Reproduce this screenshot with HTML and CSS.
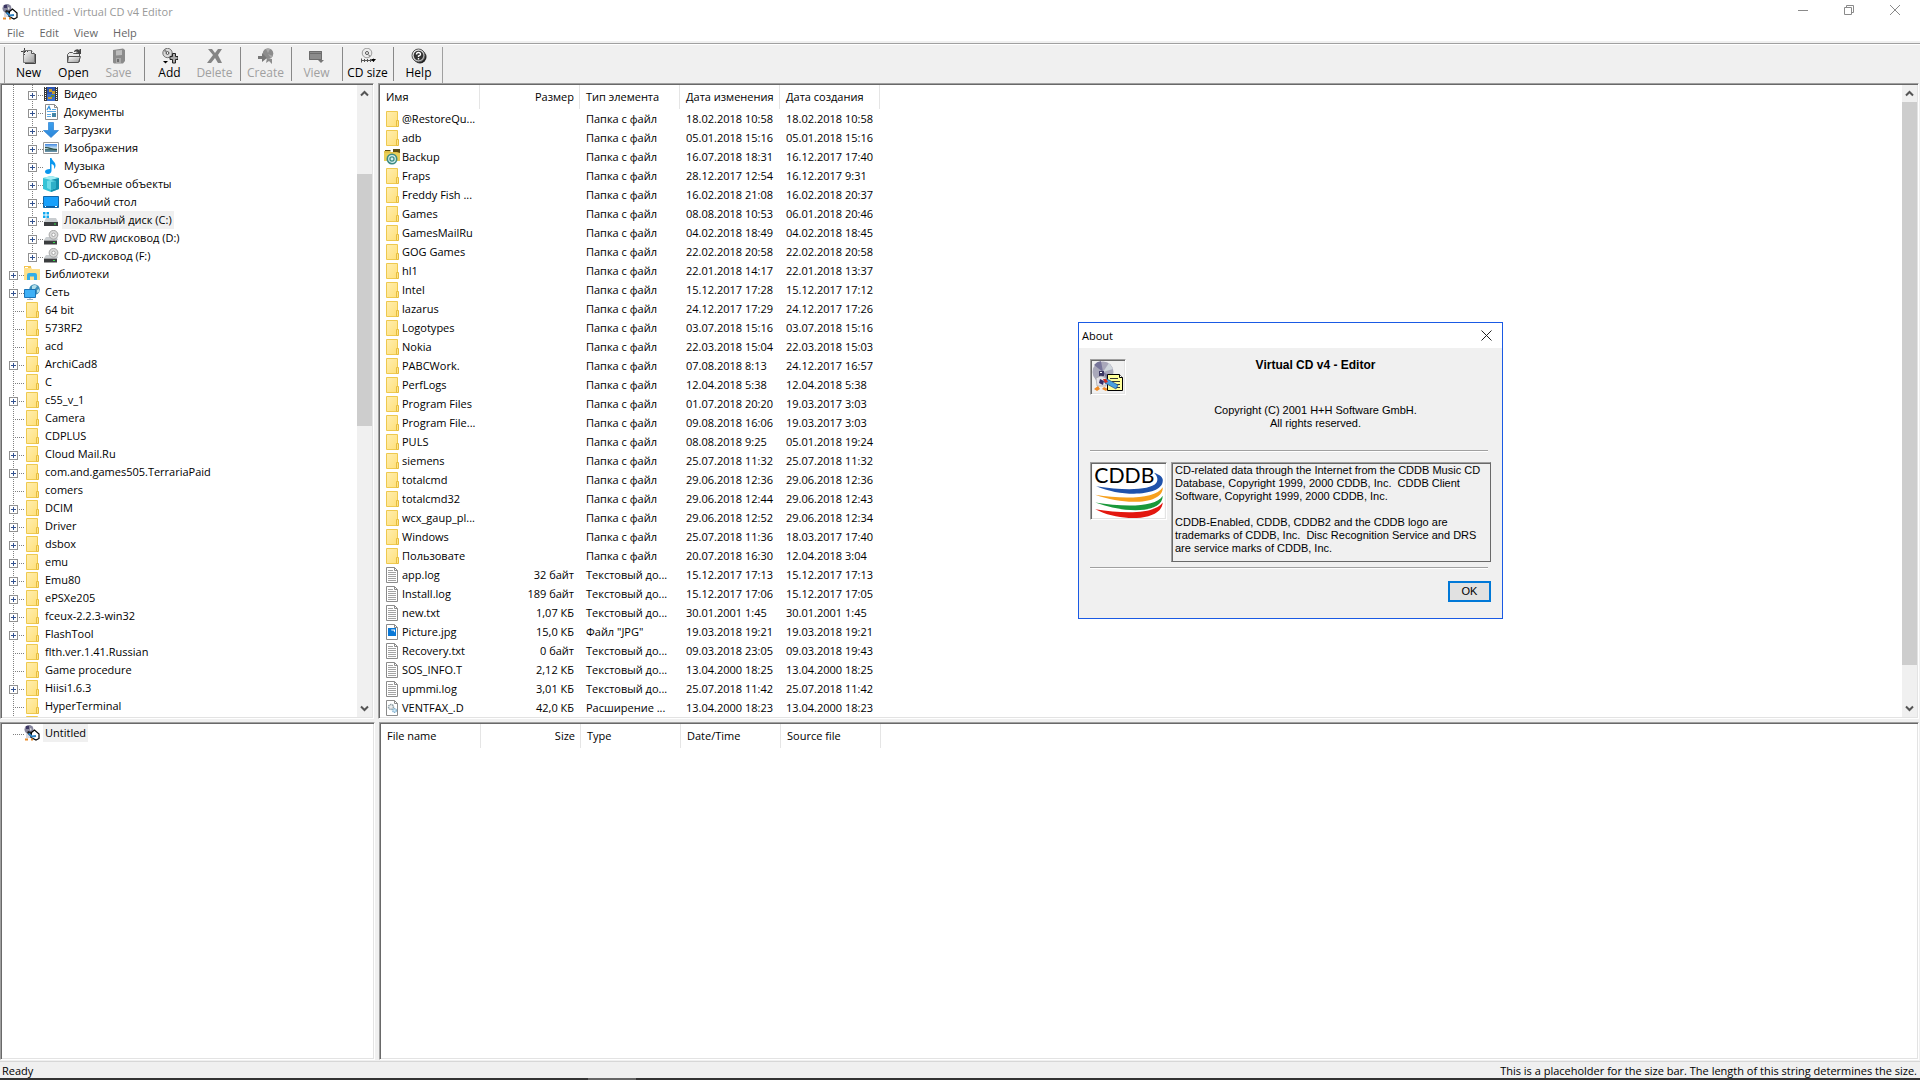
FILE: index.html
```html
<!DOCTYPE html>
<html lang="ru">
<head>
<meta charset="utf-8">
<title>Untitled - Virtual CD v4 Editor</title>
<link rel="stylesheet" href="styles.css">
</head>
<body>
<svg class="defs" aria-hidden="true">
  <defs>
    <linearGradient id="gf" x1="0" y1="0" x2="1" y2="1"><stop offset="0" stop-color="#ffeeb0"/><stop offset="1" stop-color="#ffe07a"/></linearGradient>
    <linearGradient id="gb" x1="0" y1="0" x2="0" y2="1"><stop offset="0" stop-color="#3ba0ee"/><stop offset="1" stop-color="#2c86d8"/></linearGradient>
    <linearGradient id="gp" x1="0" y1="0" x2="0" y2="1"><stop offset="0" stop-color="#3f86e0"/><stop offset=".55" stop-color="#d6ecf5"/><stop offset=".6" stop-color="#3c6a62"/><stop offset="1" stop-color="#6c97b8"/></linearGradient>
    <linearGradient id="gg" x1="0" y1="0" x2="1" y2="1"><stop offset="0" stop-color="#fff"/><stop offset="1" stop-color="#999"/></linearGradient>
  </defs>
  <symbol id="folder" viewBox="0 0 16 16"><path d="M2.5.5h11v15h-11z" fill="url(#gf)" stroke="#eec94f"/><path d="M12.5 9.5h2v6h-2z" fill="#ffe589" stroke="#e6bd3f"/></symbol>
  <symbol id="doc" viewBox="0 0 16 16"><path d="M2.5.5h8l3 3v12h-11z" fill="#fff" stroke="#8b8b8b"/><path d="M10.500.5v3h3" fill="none" stroke="#8b8b8b"/><path d="M4 3.500h5M4 5.500h8M4 7.500h8M4 9.500h8M4 11.500h8M4 13.500h8" stroke="#a3a3a3"/></symbol>
  <symbol id="jpg" viewBox="0 0 16 16"><path d="M2.500.500h8l3 3v12h-11z" fill="#fff" stroke="#8b8b8b"/><path d="M10.500.500v3h3" fill="none" stroke="#8b8b8b"/><path d="M4 4h8v8H4z" fill="#0a78d6"/><path d="M5 5.500h2l1 1.500 1-1 2 2.500V5.500z" fill="#fff"/></symbol>
  <symbol id="dll" viewBox="0 0 16 16"><path d="M2.500.500h8l3 3v12h-11z" fill="#fff" stroke="#8b8b8b"/><path d="M10.500.500v3h3" fill="none" stroke="#8b8b8b"/><circle cx="7" cy="7" r="2.500" fill="#eee" stroke="#8fa0a8" stroke-width="1.500" stroke-dasharray="1.500 .6"/><circle cx="10.500" cy="10.500" r="1.800" fill="#d4ecf8" stroke="#7fb0d0" stroke-width="1.300" stroke-dasharray="1.300 .5"/></symbol>
  <symbol id="backup" viewBox="0 0 16 16"><path d="M0 2h6l1 1h9v9H0z" fill="#e2c24a"/><path d="M1 1h5l1 1H1zM9 0h7v4l-3-1H9z" fill="#5c4d12"/><path d="M0 4h16v8H0z" fill="#e9cf58"/><circle cx="8" cy="10" r="5.500" fill="#3d8b84"/><circle cx="8" cy="10" r="3.300" fill="none" stroke="#d6efec" stroke-width="1.200"/><circle cx="8" cy="10" r="1.400" fill="#d6efec"/></symbol>
  <symbol id="video" viewBox="0 0 16 16"><path d="M1 1h14v14H1z" fill="#3a3a3a"/><path d="M4 1h8v7H4z" fill="#2c55b0"/><path d="M4 8h8v7H4z" fill="#3a6fd0"/><path d="M6 3h3v3H6zM9 5h3v3H9zM5 11h4v2H5z" fill="#c89a2c"/><path d="M8 9h3v2H8z" fill="#5a8a3c"/><path d="M2.500 1v14M13.500 1v14" stroke="#fff" stroke-dasharray="1 1"/></symbol>
  <symbol id="docs" viewBox="0 0 16 16"><path d="M2.500.500h9l3 3v12h-12z" fill="#fff" stroke="#8b8b8b"/><path d="M11.500.500v3h3" fill="none" stroke="#8b8b8b"/><path d="M4 6l2-3.500L7.500 6" fill="none" stroke="#2f8fdc" stroke-width="1.300"/><path d="M9 5.500h4M4 7.500h9M4 10.500h4M4 12.500h4" stroke="#5aa9e6"/><path d="M9 9h4v4H9z" fill="#4487a8"/></symbol>
  <symbol id="down" viewBox="0 0 16 16"><path d="M5.500.500h5v8h5L8 15.500.500 8.500h5z" fill="url(#gb)" stroke="#2c7fd0" stroke-width=".7"/></symbol>
  <symbol id="pics" viewBox="0 0 16 16"><path d="M.500 2.500h15v11H.500z" fill="#fff" stroke="#9a9a9a"/><path d="M2 4h12v8H2z" fill="url(#gp)"/><path d="M2 8c4 0 6 2 12 2v-1C9 9 6 6.500 2 7z" fill="#2f4f48"/></symbol>
  <symbol id="music" viewBox="0 0 16 16"><path d="M7 0h1.500c.5 3 4.500 4 4 8-.2 1.500-1 2.500-1.500 3 .8-3-.5-4.500-2.500-5v6.500C8.500 14.500 7 16 5 16S2 15 2 13.500 4 11 7 11z" fill="#0a97ee"/></symbol>
  <symbol id="cube" viewBox="0 0 16 16"><path d="M0 2l8-2 8 2v11l-8 3-8-3z" fill="#35c3d6"/><path d="M0 2l8-2 8 2-8 2z" fill="#a8eef4"/><path d="M8 4l8-2v11l-8 3z" fill="#1590ad"/><path d="M4 5l4-1 5 1v7l-5 2-4-2z" fill="#6edbe8"/><path d="M8 6l5-1v7l-5 2z" fill="#2fb0c8"/></symbol>
  <symbol id="desk" viewBox="0 0 16 16"><path d="M.500 2.500h15v11H.500z" fill="#18a0fb" stroke="#1267a8"/><path d="M1 12.500h14" stroke="#0a5fa8"/><path d="M2 12.500h1M12 12.500h2" stroke="#fff"/></symbol>
  <symbol id="hdd" viewBox="0 0 16 16"><path d="M0 0h2.500v2.500H0zM3.500 0H6v2.500H3.500zM0 3.500h2.500V6H0zM3.500 3.500H6V6H3.500z" fill="#12a8ee"/><path d="M3 6h10l2 4H1z" fill="#c9cdd0"/><path d="M1 10h14v4H1z" fill="#3b3d3f"/><path d="M11 11.500h2v1h-2z" fill="#32e04a"/></symbol>
  <symbol id="odd" viewBox="0 0 16 16"><path d="M3 7h11l1 3H1z" fill="#c9cdd0"/><circle cx="10.500" cy="4.800" r="4.400" fill="#dadada" stroke="#979797" stroke-width=".8"/><circle cx="10.500" cy="4.800" r="1.700" fill="#fff" stroke="#999" stroke-width=".8"/><path d="M1 10.500h13v4H1z" fill="#3b3d3f"/><path d="M10 12h2v1h-2z" fill="#32e04a"/></symbol>
  <symbol id="libs" viewBox="0 0 16 16"><path d="M0 1h7l1 2h8v11H0z" fill="#ffe08a"/><path d="M0 0h7v2H0z" fill="#f4c54e"/><path d="M1 1h3v1H1z" fill="#fff"/><path d="M3 14V9q0-2 2-2h6q2 0 2 2v5h-3v-3.500H6V14z" fill="#35aee8"/></symbol>
  <symbol id="net" viewBox="0 0 16 16"><circle cx="10.500" cy="5.500" r="5.300" fill="#3f8fb8"/><path d="M8 2q3-2 5 0l-2 3-3 1zM13 6l2-1v3l-2 1z" fill="#b5dfe8"/><path d="M.500 5.500h11v8H.500z" fill="#3eb0f6" stroke="#1b74b8"/><path d="M3 15.500h6M6 14v1" stroke="#9ab"/></symbol>
  <symbol id="app" viewBox="0 0 16 16"><circle cx="5" cy="4.500" r="4.500" fill="#85849c"/><path d="M2 1h3v3H2z" fill="#3c3763"/><path d="M6 3l2 1-2 2z" fill="#ddd"/><path d="M2 8h4v5H2z" fill="#d8d8e0"/><path d="M4 6l4 1 3 4-4 1-4-4z" fill="#222"/><path d="M7.500 7.500l3-2.500 4.500 4v4.500l-3 1.500-5-2.500z" fill="#fff" stroke="#000" stroke-width="1.200"/><path d="M4.500 8.500l3.500 3 4-.5" stroke="#2c7fc0" stroke-width="2" fill="none"/><path d="M1 14.500h3M7 14.500h2" stroke="#e88a2a" stroke-width="1.800"/></symbol>
  <symbol id="plus" viewBox="0 0 9 9"><path d="M2 4.500h5M4.500 2v5" stroke="#33528f"/></symbol>
  <symbol id="up" viewBox="0 0 9 9"><path d="M1 6.500L4.500 3 8 6.500" fill="none" stroke="#555" stroke-width="2"/></symbol>
  <symbol id="dn" viewBox="0 0 9 9"><path d="M1 2.500L4.500 6 8 2.500" fill="none" stroke="#555" stroke-width="2"/></symbol>
</svg>

<header class="titlebar">
  <svg class="ico"><use href="#app"/></svg>
  <h1>Untitled - Virtual CD v4 Editor</h1>
  <div class="winbtns">
    <button aria-label="Minimize"><svg viewBox="0 0 10 10"><path d="M0 5.500h10"/></svg></button>
    <button aria-label="Restore"><svg viewBox="0 0 10 10"><path d="M.500 2.500h7v7h-7zM2.500 2.500v-2h7v7h-2"/></svg></button>
    <button aria-label="Close"><svg viewBox="0 0 10 10"><path d="M0 0l10 10M10 0L0 10"/></svg></button>
  </div>
</header>
<nav class="menubar"><button>File</button><button>Edit</button><button>View</button><button>Help</button></nav>

<div class="toolbar">
  <div class="tools">
  <button><svg class="ico" viewBox="0 0 16 16"><path d="M2.500 2.500h8l3 3v9h-11z" fill="url(#gg)" stroke="#777"/><path d="M10.500 2.500v3h3" fill="#fff" stroke="#555"/><path d="M3.500 0v7M0 3.500h7" stroke="#444" stroke-dasharray="2 1"/><path d="M14.500 6v9.500H4" fill="none" stroke="#444"/></svg>New</button>
  <button><svg class="ico" viewBox="0 0 16 16"><path d="M1.500 6.500l2-2h3l1 1h6v8h-12z" fill="#e8e8e8" stroke="#555"/><path d="M1.500 14.500l1-6h12l-2 6z" fill="url(#gg)" stroke="#555"/><path d="M8 3q3-3 5.500-.5V1H15v5h-5V4.500h2Q10.500 3 8 4z" fill="#444"/></svg>Open</button>
  <button disabled><svg class="ico" viewBox="0 0 16 16"><path d="M2 2l10-1.500 2 1.500v11l-2 2.500H3l-1-1z" fill="#8b8b8b"/><path d="M5 2.500l6-.5v5l-6 .5z" fill="#bdbdbd"/><path d="M5 10h5v5H5z" fill="#aaa"/><path d="M6 11h2v3H6z" fill="#6f6f6f"/></svg>Save</button>
  <i></i>
  <button><svg class="ico" viewBox="0 0 16 16"><circle cx="5.500" cy="5" r="4.700" fill="#d8d8d8" stroke="#555" stroke-width=".8"/><path d="M5.500 5l-4-2 2-2z" fill="#888"/><circle cx="5.500" cy="5" r="1.400" fill="#fff" stroke="#444"/><path d="M10.500 5.500h3v3H16v3h-2.500V15h-3v-3.500H8v-3h2.500z" fill="#a8a8a8" stroke="#222"/><path d="M1 13h5l-2.500 2.500z"/></svg>Add</button>
  <button disabled><svg class="ico" viewBox="0 0 16 16"><path d="M1 1h4l3 4 3-4h4l-4 6 4 8h-4l-3-5-4 5H0l6-8z" fill="#858585"/></svg>Delete</button>
  <i></i>
  <button disabled><svg class="ico" viewBox="0 0 16 16"><circle cx="10" cy="5.500" r="5.300" fill="#8c8c8c"/><path d="M10 5L8 1h4zM10 6l5 2-2 2z" fill="#aaa"/><path d="M0 8h4V5l5 5-5 4v-3H0z" fill="#777"/><path d="M9 10l5 1v5l-3-3-3 2z" fill="#8c8c8c"/></svg>Create</button>
  <i></i>
  <button disabled><svg class="ico" viewBox="0 0 16 16"><path d="M0 3h13v9H0z" fill="#8c8c8c"/><path d="M.500 3.500h12v8h-12zM1 5.500h11" fill="none" stroke="#6c6c6c"/><path d="M9 12h6l-3 3z" fill="#777"/></svg>View</button>
  <i></i>
  <button><svg class="ico" viewBox="0 0 16 16"><circle cx="7" cy="5" r="4.800" fill="#ececec" stroke="#888" stroke-width=".8"/><circle cx="7" cy="5" r="1.500" fill="#fff" stroke="#555"/><path d="M8 6l3 2-2 1z" fill="#888"/><path d="M1.500 10.500v4M13.500 10.500v3M2 12.500h11M4.500 11v3M7.500 11v3M10.500 11v3" stroke="#555"/><path d="M11 11h5l-2.500 3z"/></svg>CD size</button>
  <i></i>
  <button><svg class="ico" viewBox="0 0 16 16"><circle cx="9" cy="9" r="6.500" fill="#222"/><circle cx="7.500" cy="7.500" r="6.500" fill="url(#gg)" stroke="#555"/><circle cx="7.500" cy="7.500" r="4.800" fill="#333"/><path d="M5.500 6.500Q5.500 4.500 7.500 4.500t2 2Q9.500 7.500 7.500 8v1M7.500 10v1.500" fill="none" stroke="#fff" stroke-width="1.400"/></svg>Help</button>
  </div>
</div>

<main>
  <div class="row upper">
    <section class="pane side">
      <ul class="tree">
        <li class="sub"><button class="x" aria-label="+"><svg><use href="#plus"/></svg></button><svg class="ico"><use href="#video"/></svg><span>Видео</span></li>
        <li class="sub"><button class="x" aria-label="+"><svg><use href="#plus"/></svg></button><svg class="ico"><use href="#docs"/></svg><span>Документы</span></li>
        <li class="sub"><button class="x" aria-label="+"><svg><use href="#plus"/></svg></button><svg class="ico"><use href="#down"/></svg><span>Загрузки</span></li>
        <li class="sub"><button class="x" aria-label="+"><svg><use href="#plus"/></svg></button><svg class="ico"><use href="#pics"/></svg><span>Изображения</span></li>
        <li class="sub"><button class="x" aria-label="+"><svg><use href="#plus"/></svg></button><svg class="ico"><use href="#music"/></svg><span>Музыка</span></li>
        <li class="sub"><button class="x" aria-label="+"><svg><use href="#plus"/></svg></button><svg class="ico"><use href="#cube"/></svg><span>Объемные объекты</span></li>
        <li class="sub"><button class="x" aria-label="+"><svg><use href="#plus"/></svg></button><svg class="ico"><use href="#desk"/></svg><span>Рабочий стол</span></li>
        <li class="sub"><button class="x" aria-label="+"><svg><use href="#plus"/></svg></button><svg class="ico"><use href="#hdd"/></svg><span class="sel">Локальный диск (C:)</span></li>
        <li class="sub"><button class="x" aria-label="+"><svg><use href="#plus"/></svg></button><svg class="ico"><use href="#odd"/></svg><span>DVD RW дисковод (D:)</span></li>
        <li class="sub last"><button class="x" aria-label="+"><svg><use href="#plus"/></svg></button><svg class="ico"><use href="#odd"/></svg><span>CD-дисковод (F:)</span></li>
        <li><button class="x" aria-label="+"><svg><use href="#plus"/></svg></button><svg class="ico"><use href="#libs"/></svg><span>Библиотеки</span></li>
        <li><button class="x" aria-label="+"><svg><use href="#plus"/></svg></button><svg class="ico"><use href="#net"/></svg><span>Сеть</span></li>
        <li class="leaf"><svg class="ico"><use href="#folder"/></svg><span>64 bit</span></li>
        <li class="leaf"><svg class="ico"><use href="#folder"/></svg><span>573RF2</span></li>
        <li class="leaf"><svg class="ico"><use href="#folder"/></svg><span>acd</span></li>
        <li><button class="x" aria-label="+"><svg><use href="#plus"/></svg></button><svg class="ico"><use href="#folder"/></svg><span>ArchiCad8</span></li>
        <li class="leaf"><svg class="ico"><use href="#folder"/></svg><span>C</span></li>
        <li><button class="x" aria-label="+"><svg><use href="#plus"/></svg></button><svg class="ico"><use href="#folder"/></svg><span>c55_v_1</span></li>
        <li class="leaf"><svg class="ico"><use href="#folder"/></svg><span>Camera</span></li>
        <li class="leaf"><svg class="ico"><use href="#folder"/></svg><span>CDPLUS</span></li>
        <li><button class="x" aria-label="+"><svg><use href="#plus"/></svg></button><svg class="ico"><use href="#folder"/></svg><span>Cloud Mail.Ru</span></li>
        <li><button class="x" aria-label="+"><svg><use href="#plus"/></svg></button><svg class="ico"><use href="#folder"/></svg><span>com.and.games505.TerrariaPaid</span></li>
        <li class="leaf"><svg class="ico"><use href="#folder"/></svg><span>comers</span></li>
        <li><button class="x" aria-label="+"><svg><use href="#plus"/></svg></button><svg class="ico"><use href="#folder"/></svg><span>DCIM</span></li>
        <li><button class="x" aria-label="+"><svg><use href="#plus"/></svg></button><svg class="ico"><use href="#folder"/></svg><span>Driver</span></li>
        <li><button class="x" aria-label="+"><svg><use href="#plus"/></svg></button><svg class="ico"><use href="#folder"/></svg><span>dsbox</span></li>
        <li><button class="x" aria-label="+"><svg><use href="#plus"/></svg></button><svg class="ico"><use href="#folder"/></svg><span>emu</span></li>
        <li><button class="x" aria-label="+"><svg><use href="#plus"/></svg></button><svg class="ico"><use href="#folder"/></svg><span>Emu80</span></li>
        <li><button class="x" aria-label="+"><svg><use href="#plus"/></svg></button><svg class="ico"><use href="#folder"/></svg><span>ePSXe205</span></li>
        <li><button class="x" aria-label="+"><svg><use href="#plus"/></svg></button><svg class="ico"><use href="#folder"/></svg><span>fceux-2.2.3-win32</span></li>
        <li><button class="x" aria-label="+"><svg><use href="#plus"/></svg></button><svg class="ico"><use href="#folder"/></svg><span>FlashTool</span></li>
        <li class="leaf"><svg class="ico"><use href="#folder"/></svg><span>flth.ver.1.41.Russian</span></li>
        <li class="leaf"><svg class="ico"><use href="#folder"/></svg><span>Game procedure</span></li>
        <li><button class="x" aria-label="+"><svg><use href="#plus"/></svg></button><svg class="ico"><use href="#folder"/></svg><span>Hiisi1.6.3</span></li>
        <li class="leaf"><svg class="ico"><use href="#folder"/></svg><span>HyperTerminal</span></li>
        <li class="leaf"><svg class="ico"><use href="#folder"/></svg></li>
      </ul>
      <div class="scroll tree-scroll"><button aria-label="Up"><svg><use href="#up"/></svg></button><div class="track"><div class="thumb"></div></div><button aria-label="Down"><svg><use href="#dn"/></svg></button></div>
    </section>
    <section class="pane list">
      <div class="table-wrap">
      <table>
        <thead><tr><th>Имя</th><th class="num">Размер</th><th>Тип элемента</th><th>Дата изменения</th><th>Дата создания</th></tr></thead>
        <tbody>
        <tr><td><svg class="ico"><use href="#folder"/></svg>@RestoreQu...</td><td></td><td>Папка с файл</td><td>18.02.2018 10:58</td><td>18.02.2018 10:58</td></tr>
        <tr><td><svg class="ico"><use href="#folder"/></svg>adb</td><td></td><td>Папка с файл</td><td>05.01.2018 15:16</td><td>05.01.2018 15:16</td></tr>
        <tr><td><svg class="ico"><use href="#backup"/></svg>Backup</td><td></td><td>Папка с файл</td><td>16.07.2018 18:31</td><td>16.12.2017 17:40</td></tr>
        <tr><td><svg class="ico"><use href="#folder"/></svg>Fraps</td><td></td><td>Папка с файл</td><td>28.12.2017 12:54</td><td>16.12.2017 9:31</td></tr>
        <tr><td><svg class="ico"><use href="#folder"/></svg>Freddy Fish ...</td><td></td><td>Папка с файл</td><td>16.02.2018 21:08</td><td>16.02.2018 20:37</td></tr>
        <tr><td><svg class="ico"><use href="#folder"/></svg>Games</td><td></td><td>Папка с файл</td><td>08.08.2018 10:53</td><td>06.01.2018 20:46</td></tr>
        <tr><td><svg class="ico"><use href="#folder"/></svg>GamesMailRu</td><td></td><td>Папка с файл</td><td>04.02.2018 18:49</td><td>04.02.2018 18:45</td></tr>
        <tr><td><svg class="ico"><use href="#folder"/></svg>GOG Games</td><td></td><td>Папка с файл</td><td>22.02.2018 20:58</td><td>22.02.2018 20:58</td></tr>
        <tr><td><svg class="ico"><use href="#folder"/></svg>hl1</td><td></td><td>Папка с файл</td><td>22.01.2018 14:17</td><td>22.01.2018 13:37</td></tr>
        <tr><td><svg class="ico"><use href="#folder"/></svg>Intel</td><td></td><td>Папка с файл</td><td>15.12.2017 17:28</td><td>15.12.2017 17:12</td></tr>
        <tr><td><svg class="ico"><use href="#folder"/></svg>lazarus</td><td></td><td>Папка с файл</td><td>24.12.2017 17:29</td><td>24.12.2017 17:26</td></tr>
        <tr><td><svg class="ico"><use href="#folder"/></svg>Logotypes</td><td></td><td>Папка с файл</td><td>03.07.2018 15:16</td><td>03.07.2018 15:16</td></tr>
        <tr><td><svg class="ico"><use href="#folder"/></svg>Nokia</td><td></td><td>Папка с файл</td><td>22.03.2018 15:04</td><td>22.03.2018 15:03</td></tr>
        <tr><td><svg class="ico"><use href="#folder"/></svg>PABCWork.</td><td></td><td>Папка с файл</td><td>07.08.2018 8:13</td><td>24.12.2017 16:57</td></tr>
        <tr><td><svg class="ico"><use href="#folder"/></svg>PerfLogs</td><td></td><td>Папка с файл</td><td>12.04.2018 5:38</td><td>12.04.2018 5:38</td></tr>
        <tr><td><svg class="ico"><use href="#folder"/></svg>Program Files</td><td></td><td>Папка с файл</td><td>01.07.2018 20:20</td><td>19.03.2017 3:03</td></tr>
        <tr><td><svg class="ico"><use href="#folder"/></svg>Program File...</td><td></td><td>Папка с файл</td><td>09.08.2018 16:06</td><td>19.03.2017 3:03</td></tr>
        <tr><td><svg class="ico"><use href="#folder"/></svg>PULS</td><td></td><td>Папка с файл</td><td>08.08.2018 9:25</td><td>05.01.2018 19:24</td></tr>
        <tr><td><svg class="ico"><use href="#folder"/></svg>siemens</td><td></td><td>Папка с файл</td><td>25.07.2018 11:32</td><td>25.07.2018 11:32</td></tr>
        <tr><td><svg class="ico"><use href="#folder"/></svg>totalcmd</td><td></td><td>Папка с файл</td><td>29.06.2018 12:36</td><td>29.06.2018 12:36</td></tr>
        <tr><td><svg class="ico"><use href="#folder"/></svg>totalcmd32</td><td></td><td>Папка с файл</td><td>29.06.2018 12:44</td><td>29.06.2018 12:43</td></tr>
        <tr><td><svg class="ico"><use href="#folder"/></svg>wcx_gaup_pl...</td><td></td><td>Папка с файл</td><td>29.06.2018 12:52</td><td>29.06.2018 12:34</td></tr>
        <tr><td><svg class="ico"><use href="#folder"/></svg>Windows</td><td></td><td>Папка с файл</td><td>25.07.2018 11:36</td><td>18.03.2017 17:40</td></tr>
        <tr><td><svg class="ico"><use href="#folder"/></svg>Пользовате</td><td></td><td>Папка с файл</td><td>20.07.2018 16:30</td><td>12.04.2018 3:04</td></tr>
        <tr><td><svg class="ico"><use href="#doc"/></svg>app.log</td><td class="num">32 байт</td><td>Текстовый до...</td><td>15.12.2017 17:13</td><td>15.12.2017 17:13</td></tr>
        <tr><td><svg class="ico"><use href="#doc"/></svg>Install.log</td><td class="num">189 байт</td><td>Текстовый до...</td><td>15.12.2017 17:06</td><td>15.12.2017 17:05</td></tr>
        <tr><td><svg class="ico"><use href="#doc"/></svg>new.txt</td><td class="num">1,07 КБ</td><td>Текстовый до...</td><td>30.01.2001 1:45</td><td>30.01.2001 1:45</td></tr>
        <tr><td><svg class="ico"><use href="#jpg"/></svg>Picture.jpg</td><td class="num">15,0 КБ</td><td>Файл "JPG"</td><td>19.03.2018 19:21</td><td>19.03.2018 19:21</td></tr>
        <tr><td><svg class="ico"><use href="#doc"/></svg>Recovery.txt</td><td class="num">0 байт</td><td>Текстовый до...</td><td>09.03.2018 23:05</td><td>09.03.2018 19:43</td></tr>
        <tr><td><svg class="ico"><use href="#doc"/></svg>SOS_INFO.T</td><td class="num">2,12 КБ</td><td>Текстовый до...</td><td>13.04.2000 18:25</td><td>13.04.2000 18:25</td></tr>
        <tr><td><svg class="ico"><use href="#doc"/></svg>upmmi.log</td><td class="num">3,01 КБ</td><td>Текстовый до...</td><td>25.07.2018 11:42</td><td>25.07.2018 11:42</td></tr>
        <tr><td><svg class="ico"><use href="#dll"/></svg>VENTFAX_.D</td><td class="num">42,0 КБ</td><td>Расширение ...</td><td>13.04.2000 18:23</td><td>13.04.2000 18:23</td></tr>
        </tbody>
      </table>
      </div>
      <div class="scroll list-scroll"><button aria-label="Up"><svg><use href="#up"/></svg></button><div class="track"><div class="thumb"></div></div><button aria-label="Down"><svg><use href="#dn"/></svg></button></div>
    </section>
  </div>
  <div class="row lower">
    <section class="pane side">
      <ul class="tree"><li class="leaf only"><svg class="ico"><use href="#app"/></svg><span class="sel">Untitled</span></li></ul>
    </section>
    <section class="pane list">
      <div class="table-wrap">
      <table><thead><tr><th>File name</th><th class="num">Size</th><th>Type</th><th>Date/Time</th><th>Source file</th></tr></thead></table>
      </div>
    </section>
  </div>
</main>
<footer class="status"><span>Ready</span><span>This is a placeholder for the size bar. The length of this string determines the size.</span></footer>
<div class="taskbar"><div></div></div>

<div class="dialog" role="dialog" aria-labelledby="about">
  <div class="dlg-title"><h2 id="about">About</h2><button aria-label="Close"><svg viewBox="0 0 11 11"><path d="M.500.500l10 10M10.500.500l-10 10"/></svg></button></div>
  <div class="dlg-body">
    <div class="dlg-top">
      <svg class="sunk" viewBox="0 0 32 32"><circle cx="11" cy="11" r="10.500" fill="#a9a8ba"/><path d="M11 11L2 4a11 11 0 0 1 7-4zM11 11l9 5a11 11 0 0 1-4 4z" fill="#77759a"/><path d="M11 11L17 2l4 6z" fill="#cfd6dc"/><path d="M7 10h5v5H7z" fill="#3c3763"/><path d="M8 11h2v1H8z" fill="#fff"/><path d="M4 17l5-2 5 2v8H5z" fill="#e5e3ea" stroke="#999" stroke-width=".6"/><path d="M8 18l4 2-1 4-4-2z" fill="#34306a"/><path d="M2 28l4-3 2 3-3 2zM10 28l2-2 4 2-2 2z" fill="#f08a24"/><path d="M15.500 13.500h12l3 3v13h-15z" fill="#ffff9c" stroke="#000"/><path d="M27.500 13.500v3h3" fill="#fff" stroke="#000"/><path d="M18 17.500h8M20 20.500h8M24 23.500h4M24 26.500h4" stroke="#333"/><path d="M12 19l3-1 11 6-2 4-11-6z" fill="#4aa0e0" stroke="#1c4f90" stroke-width=".7"/><path d="M11 18h3l2 3-3 1z" fill="#d82c1e"/></svg>
      <div class="about-text"><h3>Virtual CD v4 - Editor</h3><p>Copyright (C) 2001 H+H Software GmbH.<br>All rights reserved.</p></div>
    </div>
    <hr>
    <div class="dlg-mid">
      <svg class="sunk logo" viewBox="0 0 75 56"><path d="M0 0h75v56H0z" fill="#fff"/><text x="2" y="20">CDDB</text><path d="M64 9C70 11 74 14 73 18 72 33 32 35 4 23 34 28 60 27 66 20 69 16 67 12 64 9z" fill="#1f52ab"/><path d="M73 24C74 41 36 44 3 32 34 37 66 36 73 24z" fill="#f7a01d"/><path d="M73 33C73 51 36 52 3 40 34 45 66 45 73 33z" fill="#18983a"/><path d="M73 40C72 59 30 61 3 47 34 52 64 52 73 40z" fill="#e3170f"/></svg>
      <div class="legal"><p>CD-related data through the Internet from the CDDB Music CD<br>Database, Copyright 1999, 2000 CDDB, Inc.&nbsp; CDDB Client<br>Software, Copyright 1999, 2000 CDDB, Inc.</p><p>CDDB-Enabled, CDDB, CDDB2 and the CDDB logo are<br>trademarks of CDDB, Inc.&nbsp; Disc Recognition Service and DRS<br>are service marks of CDDB, Inc.</p></div>
    </div>
    <hr>
    <button class="ok">OK</button>
  </div>
</div>
</body>
</html>
```

FILE: styles.css
```css
* { box-sizing: border-box; }
body {
  margin: 0;
  height: 100vh;
  display: flex;
  flex-direction: column;
  overflow: hidden;
  background: #f0f0f0;
  color: #000;
  font: 11px/18px "Open Sans", "Noto Sans", sans-serif;
}
button { font: inherit; color: inherit; background: none; border: 0; padding: 0; margin: 0; }
h1, h2, h3, p, ul { margin: 0; padding: 0; font: inherit; }
.defs { position: absolute; width: 0; height: 0; }
.ico { width: 16px; height: 16px; flex: none; display: block; }

.titlebar { display: flex; align-items: center; gap: 5px; height: 24px; padding: 0 2px; background: #fff; color: #999; }
.titlebar h1 { flex: 1; }
.winbtns { display: flex; align-self: flex-start; }
.winbtns button { width: 46px; height: 20px; display: grid; place-items: center; }
.winbtns svg { width: 10px; height: 10px; fill: none; stroke: #8a8a8a; }

.menubar { display: flex; height: 17px; padding-left: 7px; gap: 15px; background: #fff; color: #666; }

.toolbar { height: 42px; padding: 4px 0 0 4px; border-top: 2px solid #f0f0f0; box-shadow: inset 0 1px #a0a0a0, inset 0 2px #fff; }
.tools { display: inline-flex; height: 36px; padding-left: 2px; border-left: 1px solid #a0a0a0; border-right: 1px solid #a0a0a0; }
.tools button { width: 45px; padding: 1px 2px 0 0; display: flex; flex-direction: column; align-items: center; white-space: nowrap; font-size: 12px; }
.tools button:disabled { color: #a0a0a0; }
.tools i { width: 6px; padding: 0 2px; }
.tools i::before { content: ""; display: block; width: 1px; height: 34px; background: #888; }

main { flex: 1; min-height: 0; display: flex; flex-direction: column; gap: 3px; padding-right: 1px; }
.row { display: flex; gap: 4px; min-height: 0; flex-basis: 0; }
.upper { flex-grow: 636; }
.lower { flex-grow: 338; }
.pane {
  display: flex;
  min-height: 0;
  padding: 1px;
  background: #fff;
  border: 1px solid;
  border-color: #a0a0a0 #fff #fff #a0a0a0;
  box-shadow: inset 1px 1px #696969, inset -1px -1px #e3e3e3;
}
.side { width: 374px; flex: none; }
.lower .side { width: 375px; }
.list { flex: 1; min-width: 0; }

.tree { flex: 1; overflow: hidden; list-style: none; --dots: repeating-linear-gradient(to bottom, #808080 0 1px, transparent 1px 2px); --dash: repeating-linear-gradient(to right, #808080 0 1px, transparent 1px 2px); }
.tree li {
  display: flex;
  align-items: center;
  height: 18px;
  padding-left: 7px;
  background: var(--dots) 11px 0 / 1px 18px no-repeat, var(--dash) 11px 10px / 11px 1px no-repeat;
}
.tree li.sub { padding-left: 26px; background: var(--dots) 11px 0 / 1px 18px no-repeat, var(--dots) 30px 0 / 1px 18px no-repeat, var(--dash) 30px 10px / 11px 1px no-repeat; }
.tree li.last { background: var(--dots) 11px 0 / 1px 18px no-repeat, var(--dots) 30px 0 / 1px 10px no-repeat, var(--dash) 30px 10px / 11px 1px no-repeat; }
.tree li.leaf { padding-left: 22px; }
.tree li.only { background: var(--dash) 11px 10px / 11px 1px no-repeat; }
.tree span { margin-left: 3px; padding: 0 2px; white-space: nowrap; }
.tree .sel { background: #f0f0f0; }
.x { align-self: flex-start; width: 9px; height: 9px; margin: 6px 6px 0 0; background: #fff; box-shadow: inset 0 0 0 1px #919191; }
.x svg { display: block; width: 9px; height: 9px; }

.scroll { display: flex; flex-direction: column; width: 15px; flex: none; background: #f0f0f0; }
.scroll button { height: 17px; display: grid; place-items: center; }
.scroll svg { width: 9px; height: 9px; }
.track { flex: 1; display: flex; flex-direction: column; }
.track::before, .track::after { content: ""; flex: 0 0 0; }
.thumb { background: #cdcdcd; flex: 252 0 0; }
.tree-scroll .track::before { flex-grow: 72; }
.tree-scroll .track::after { flex-grow: 274; }
.list-scroll .thumb { flex-grow: 563; }
.list-scroll .track::after { flex-grow: 35; }

.table-wrap { flex: 1; overflow: hidden; }
table { border-collapse: separate; border-spacing: 0; table-layout: fixed; width: 500px; white-space: nowrap; }
th, td { height: 19px; padding: 0 0 0 6px; font-weight: normal; text-align: left; line-height: 18px; }
th { height: 24px; border-right: 1px solid #e5e5e5; }
td:first-child { display: flex; align-items: center; gap: 2px; padding-left: 4px; }
th.num, td.num { text-align: right; padding: 0 6px 0 0; }
th.num { padding-right: 5px; }

.status { display: flex; justify-content: space-between; height: 17px; margin-top: 1px; padding: 1px 3px 0 2px; line-height: 16px; border-top: 1px solid #d7d7d7; }
.taskbar { height: 2px; background: #333; padding-left: 588px; }
.taskbar div { width: 48px; height: 2px; background: #666; }

.dialog { position: absolute; left: 1078px; top: 322px; width: 425px; background: #f0f0f0; border: 1px solid #1a5ae4; font: 11px/13px "Liberation Sans", Arial, sans-serif; }
.dlg-title { display: flex; align-items: center; justify-content: space-between; height: 25px; padding: 0 10px 0 3px; background: #fff; font: 11px/18px "Open Sans", "Noto Sans", sans-serif; }
.dlg-title svg { display: block; width: 11px; height: 11px; fill: none; stroke: #222; }
.dlg-body { padding: 11px 11px 16px; display: flex; flex-direction: column; }
.dlg-top { display: flex; gap: 14px; height: 91px; }
.sunk { width: 36px; height: 36px; flex: none; padding: 1px; border: 1px solid; border-color: #a0a0a0 #fff #fff #a0a0a0; box-shadow: inset 1px 1px #696969, inset -1px -1px #e3e3e3; }
.about-text { flex: 1; text-align: center; }
.about-text h3 { font-size: 12px; font-weight: bold; margin-bottom: 32px; }
.dlg-body hr { width: 398px; height: 2px; margin: 0; border: 0; border-top: 1px solid #a0a0a0; background: #fff; }
.dlg-mid { display: flex; align-items: flex-start; gap: 4px; margin: 10px 0 5px; }
.logo { width: 77px; height: 58px; }
.logo text { font: 22px Lato, sans-serif; }
.legal { flex: 1; height: 100px; padding: 1px 3px; border: 1px solid; border-color: #a0a0a0 #696969 #696969 #a0a0a0; box-shadow: inset 1px 1px #696969; white-space: nowrap; }
.legal p + p { margin-top: 13px; }
.ok { align-self: flex-end; width: 43px; height: 21px; margin-top: 12px; background: #e1e1e1; border: 2px solid #0078d7; }
```
